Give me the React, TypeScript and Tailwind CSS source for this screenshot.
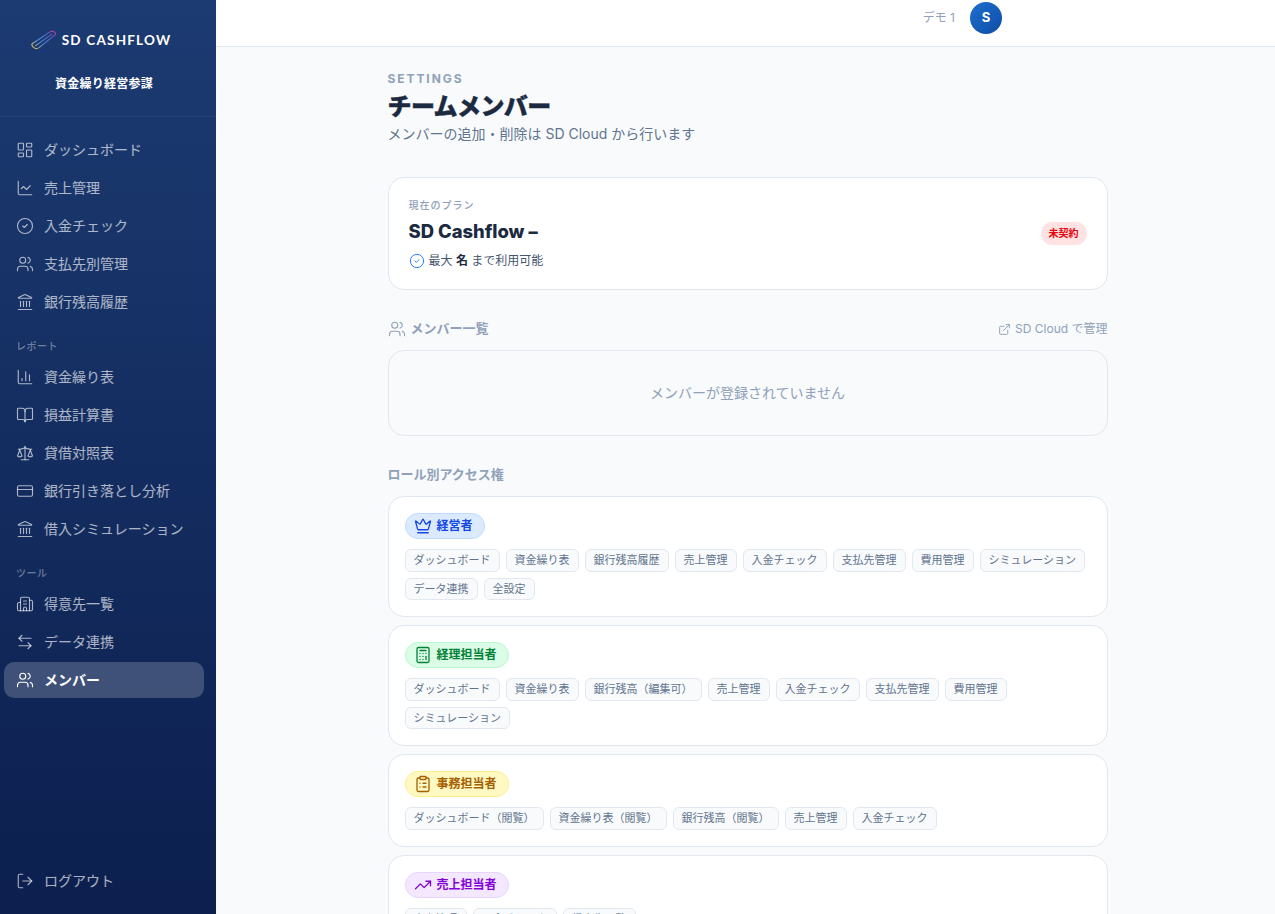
import type { ComponentType, ReactNode } from "react";
import {
  ArrowLeftRight,
  BookOpen,
  Building2,
  Calculator,
  ChartColumn,
  ChartLine,
  CircleCheck,
  ClipboardList,
  CreditCard,
  Crown,
  ExternalLink,
  Landmark,
  LayoutDashboard,
  LogOut,
  Scale,
  TrendingUp,
  Users,
} from "lucide-react";

type IconType = ComponentType<{ className?: string; strokeWidth?: number }>;
type NavEntry = { label: string; icon: IconType; active?: boolean };

const mainNav: NavEntry[] = [
  { label: "ダッシュボード", icon: LayoutDashboard },
  { label: "売上管理", icon: ChartLine },
  { label: "入金チェック", icon: CircleCheck },
  { label: "支払先別管理", icon: Users },
  { label: "銀行残高履歴", icon: Landmark },
];

const reportNav: NavEntry[] = [
  { label: "資金繰り表", icon: ChartColumn },
  { label: "損益計算書", icon: BookOpen },
  { label: "貸借対照表", icon: Scale },
  { label: "銀行引き落とし分析", icon: CreditCard },
  { label: "借入シミュレーション", icon: Landmark },
];

const toolNav: NavEntry[] = [
  { label: "得意先一覧", icon: Building2 },
  { label: "データ連携", icon: ArrowLeftRight },
  { label: "メンバー", icon: Users, active: true },
];

const roles = [
  {
    name: "経営者",
    icon: Crown,
    badge: "bg-blue-100 border-blue-200 text-blue-700",
    tags: ["ダッシュボード", "資金繰り表", "銀行残高履歴", "売上管理", "入金チェック", "支払先管理", "費用管理", "シミュレーション", "データ連携", "全設定"],
  },
  {
    name: "経理担当者",
    icon: Calculator,
    badge: "bg-green-100 border-green-200 text-green-700",
    tags: ["ダッシュボード", "資金繰り表", "銀行残高（編集可）", "売上管理", "入金チェック", "支払先管理", "費用管理", "シミュレーション"],
  },
  {
    name: "事務担当者",
    icon: ClipboardList,
    badge: "bg-yellow-100 border-yellow-200 text-yellow-700",
    tags: ["ダッシュボード（閲覧）", "資金繰り表（閲覧）", "銀行残高（閲覧）", "売上管理", "入金チェック"],
  },
  {
    name: "売上担当者",
    icon: TrendingUp,
    badge: "bg-purple-100 border-purple-200 text-purple-700",
    tags: ["売上管理", "入金チェック", "得意先一覧"],
  },
];

function NavItem({ label, icon: Icon, active }: NavEntry) {
  return (
    <a
      className={`mb-0.5 flex h-9 items-center gap-[10px] rounded-[10px] pl-3 text-sm ${
        active ? "bg-white/20 font-semibold text-white" : "font-normal text-white/65"
      }`}
    >
      <Icon className="size-[18px] shrink-0" strokeWidth={1.5} />
      {label}
    </a>
  );
}

function NavLabel({ children, className }: { children: ReactNode; className: string }) {
  return <div className={`pl-3 text-[10px] font-medium tracking-[0.05em] text-white/40 ${className}`}>{children}</div>;
}

function Logo() {
  return (
    <svg width="26" height="20" viewBox="0 0 26 20" fill="none" className="shrink-0">
      <defs>
        <linearGradient id="clip" x1="1" y1="19" x2="25" y2="1" gradientUnits="userSpaceOnUse">
          <stop offset="0" stopColor="#f5c542" />
          <stop offset="0.35" stopColor="#4f8fe0" />
          <stop offset="0.75" stopColor="#5a62c8" />
          <stop offset="1" stopColor="#d0348f" />
        </linearGradient>
      </defs>
      <path
        d="M1.5 13.5 L19.5 1.6 C22 0.2 25.5 2.6 24 5 L8 17.6 C6.6 18.6 4 19 2.2 17 C0.8 15.6 0.4 14.4 1.5 13.5 Z M4.6 15.6 L20.6 4.4"
        stroke="url(#clip)"
        strokeWidth="1.1"
        strokeLinecap="round"
      />
    </svg>
  );
}

function Sidebar() {
  return (
    <aside className="flex h-full w-[216px] shrink-0 flex-col bg-gradient-to-b from-[#1c3b72] to-[#0c1f4e]">
      <div className="flex h-[117px] shrink-0 flex-col items-center border-b border-white/5 pr-2 pt-[30px]">
        <div className="mr-1.5 flex h-5 items-center gap-[5px]">
          <Logo />
          <span className="font-['Lato'] text-[13.5px] font-bold tracking-[0.09em] text-white">SD CASHFLOW</span>
        </div>
        <div className="mt-[26px] text-[12px] font-semibold leading-4 tracking-[0.02em] text-white">資金繰り経営参謀</div>
      </div>
      <nav className="flex-1 pl-1 pr-3 pt-[15px]">
        {mainNav.map((n) => (
          <NavItem key={n.label} {...n} />
        ))}
        <NavLabel className="mb-[5px] mt-[18px] leading-4">レポート</NavLabel>
        {reportNav.map((n) => (
          <NavItem key={n.label} {...n} />
        ))}
        <NavLabel className="mb-[5px] mt-[18px] leading-4">ツール</NavLabel>
        {toolNav.map((n) => (
          <NavItem key={n.label} {...n} />
        ))}
      </nav>
      <div className="pb-[13px] pl-1 pr-3">
        <NavItem label="ログアウト" icon={LogOut} />
      </div>
    </aside>
  );
}

function RoleCard({ role }: { role: (typeof roles)[number] }) {
  const Icon = role.icon;
  return (
    <div className="rounded-2xl border border-slate-200 bg-white p-4">
      <div className={`flex h-[26px] w-fit items-center gap-[5px] rounded-full border pl-2 pr-[11px] text-[12px] font-bold ${role.badge}`}>
        <Icon className="size-[18px]" strokeWidth={1.75} />
        {role.name}
      </div>
      <div className="mt-[10px] flex flex-wrap gap-1.5">
        {role.tags.map((t) => (
          <span key={t} className="flex h-[22.5px] items-center rounded-md border border-slate-200 bg-slate-50 px-2 text-[11px] text-slate-500">
            {t}
          </span>
        ))}
      </div>
    </div>
  );
}

export default function App() {
  return (
    <div className="flex h-screen overflow-hidden bg-slate-50 font-['Inter','Noto_Sans_CJK_JP',sans-serif]">
      <Sidebar />
      <div className="min-w-0 flex-1">
        <header className="flex h-[47px] justify-end gap-[15px] border-b border-slate-200 bg-white pr-[273px] pt-0.5">
          <span className="mt-[8px] text-[12px] leading-4 text-slate-400">デモ 1</span>
          <div className="flex size-8 items-center justify-center rounded-full bg-gradient-to-br from-[#1d6fcf] to-[#0f4da8] text-[13px] font-bold text-white">S</div>
        </header>

        <main className="ml-[171.5px] w-[720px] pt-[24px]">
          <div className="text-[12px] font-bold leading-4 tracking-[0.16em] text-slate-400">SETTINGS</div>
          <h1 className="mt-[4px] text-[24px] font-black leading-8 tracking-[-0.025em] text-[#1b2a41] [-webkit-text-stroke:0.4px_#1b2a41]">チームメンバー</h1>
          <p className="mt-[1px] text-sm leading-5 text-slate-500">メンバーの追加・削除は SD Cloud から行います</p>

          <section className="mt-[33px] flex h-[113px] items-center justify-between rounded-2xl border border-slate-200 bg-white px-5">
            <div>
              <div className="-mt-0.5 text-[10px] font-medium leading-4 tracking-[0.1em] text-slate-400">現在のプラン</div>
              <div className="mt-[6px] text-[18.4px] font-extrabold leading-6 text-[#1b2a41]">SD Cashflow –</div>
              <div className="mt-[10px] flex items-center gap-[4px] text-[12px] leading-4 text-slate-600">
                <CircleCheck className="size-4 text-blue-500" strokeWidth={1.5} />
                <span>
                  最大 <b className="font-bold text-[#1b2a41]">名</b> まで利用可能
                </span>
              </div>
            </div>
            <span className="flex h-[23px] items-center rounded-full bg-red-100 px-2 text-[10px] font-bold text-red-600">未契約</span>
          </section>

          <div className="mt-[31px] flex h-4 items-center justify-between">
            <div className="flex items-center gap-[5px] text-[13px] font-semibold text-slate-400">
              <Users className="size-[18px]" strokeWidth={1.5} />
              メンバー一覧
            </div>
            <div className="flex items-center gap-[4px] text-[12px] text-slate-400">
              <ExternalLink className="size-[13px]" strokeWidth={1.75} />
              SD Cloud で管理
            </div>
          </div>

          <section className="mt-[13px] flex h-[86px] items-center justify-center rounded-2xl border border-slate-200 bg-slate-50 text-sm text-slate-400">
            メンバーが登録されていません
          </section>

          <div className="mt-[30px] text-[13px] font-bold leading-4 text-slate-400">ロール別アクセス権</div>

          <div className="mt-[14px] flex flex-col gap-2">
            {roles.map((r) => (
              <RoleCard key={r.name} role={r} />
            ))}
          </div>
        </main>
      </div>
    </div>
  );
}
